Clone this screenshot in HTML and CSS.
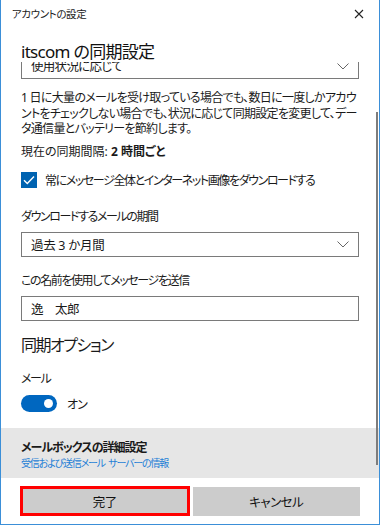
FILE: index.html
```html
<!DOCTYPE html>
<html lang="ja">
<head>
  <meta charset="UTF-8">
  <title>アカウントの設定</title>
  <link rel="stylesheet" href="styles.css">
</head>
<body>
  <div class="window">
    <div class="titlebar">
      <span class="title">アカウントの設定</span>
      <svg class="close" width="10" height="10" viewBox="0 0 10 10">
        <path d="M1 1 L9 9 M9 1 L1 9" stroke="#222" stroke-width="1.1" fill="none"/>
      </svg>
    </div>
    <h1 class="heading">itscom の同期設定</h1>
    <div class="scroll">
      <div class="content">
        <div class="select select-cut">
          <span>使用状況に応じて</span>
          <svg class="chevron" width="12" height="7" viewBox="0 0 12 7"><path d="M0.5 0.5 L6 6 L11.5 0.5" stroke="#666" fill="none"/></svg>
        </div>
        <p class="desc">1 日に大量のメールを受け取っている場合でも、数日に一度しかアカウ<br>ントをチェックしない場合でも、状況に応じて同期設定を変更して、デー<br>タ通信量とバッテリーを節約します。</p>
        <p class="current">現在の同期間隔: <b>2 時間ごと</b></p>
        <label class="check">
          <span class="box">
            <svg width="16" height="16" viewBox="0 0 16 16"><path d="M3 8.2 L6.3 11.5 L13 4.5" stroke="#fff" stroke-width="1.4" fill="none"/></svg>
          </span>
          常にメッセージ全体とインターネット画像をダウンロードする
        </label>
        <div class="field-label">ダウンロードするメールの期間</div>
        <div class="select">
          <span>過去 3 か月間</span>
          <svg class="chevron" width="12" height="7" viewBox="0 0 12 7"><path d="M0.5 0.5 L6 6 L11.5 0.5" stroke="#666" fill="none"/></svg>
        </div>
        <div class="field-label">この名前を使用してメッセージを送信</div>
        <div class="input">逸　太郎</div>
        <h2 class="subheading">同期オプション</h2>
        <div class="field-label">メール</div>
        <div class="toggle-row">
          <span class="toggle"><span class="knob"></span></span>
          <span>オン</span>
        </div>
      </div>
      <div class="scrollbar"></div>
      <div class="advanced">
        <div class="adv-title">メールボックスの詳細設定</div>
        <a class="adv-link">受信および送信メール サーバーの情報</a>
      </div>
    </div>
    <div class="footer">
      <button class="btn btn-done">完了</button>
      <button class="btn">キャンセル</button>
    </div>
  </div>
</body>
</html>
```

FILE: styles.css
```css
* {
  box-sizing: border-box;
}

body {
  margin: 0;
  font-family: "Noto Sans", "Noto Sans CJK JP", sans-serif;
  font-feature-settings: "palt";
  color: #1a1a1a;
  background: #fff;
}

.window {
  width: 380px;
  height: 525px;
  border: 1px solid #3b8fd8;
  border-top: none;
  display: flex;
  flex-direction: column;
  overflow: hidden;
  background: #fff;
}

.titlebar {
  height: 29px;
  display: flex;
  align-items: center;
  justify-content: space-between;
  padding: 0 15px 2px 11px;
}

.title {
  font-size: 10.5px;
  letter-spacing: -0.4px;
  color: #222;
}

.heading {
  margin: 0;
  height: 33px;
  padding: 14px 0 0 20px;
  font-size: 17px;
  line-height: 18px;
  letter-spacing: -0.7px;
  font-weight: 400;
  color: #111;
  position: relative;
  z-index: 1;
  background: #fff;
}

.scroll {
  flex: 1;
  position: relative;
  display: flex;
  flex-direction: column;
  overflow: hidden;
}

.content {
  flex: 1;
  padding: 0 20px;
  font-size: 12px;
}

.select {
  height: 25px;
  border: 1px solid #7a7a7a;
  display: flex;
  align-items: center;
  justify-content: space-between;
  padding: 0 9px;
  font-size: 12.5px;
  letter-spacing: -0.3px;
}

.select-cut {
  margin-top: -10px;
  height: 27px;
  letter-spacing: -0.7px;
}

.chevron {
  margin-top: 1px;
}

.desc {
  margin: 11px 0 0;
  line-height: 15.5px;
  font-size: 12px;
  letter-spacing: -0.7px;
  white-space: nowrap;
}

.current {
  margin: 5px 0 0;
  font-size: 12px;
}

.current b {
  font-weight: 700;
}

.check {
  display: flex;
  align-items: center;
  gap: 8px;
  margin-top: 11px;
  font-size: 12px;
  letter-spacing: -1.4px;
}

.box {
  width: 16px;
  height: 16px;
  background: #0063b1;
  display: flex;
  flex: none;
}

.field-label {
  margin-top: 18px;
  font-size: 12px;
  letter-spacing: -1.4px;
}

.select + .field-label {
  margin-top: 14px;
}

.field-label + .select,
.field-label + .input {
  margin-top: 7px;
}

.input {
  height: 25px;
  border: 1px solid #7a7a7a;
  padding: 0 9px;
  display: flex;
  align-items: center;
  font-size: 12.5px;
  letter-spacing: -0.5px;
}

.subheading {
  margin: 11px 0 0;
  font-size: 16px;
  letter-spacing: -1.5px;
  font-weight: 400;
}

.subheading + .field-label {
  margin-top: 13px;
}

.toggle-row {
  display: flex;
  align-items: center;
  gap: 10px;
  margin-top: 8px;
  font-size: 12px;
  letter-spacing: -1px;
}

.toggle {
  width: 36px;
  height: 17px;
  border-radius: 9px;
  background: #0067c0;
  display: flex;
  align-items: center;
  justify-content: flex-end;
  padding-right: 4px;
}

.knob {
  width: 9px;
  height: 9px;
  border-radius: 50%;
  background: #fff;
}

.advanced {
  height: 50px;
  background: #e6e6e6;
  padding: 12px 20px 0;
}

.adv-title {
  font-size: 12px;
  font-weight: 700;
  line-height: 15px;
  letter-spacing: -1px;
}

.adv-link {
  display: block;
  font-size: 10px;
  color: #1f7fd6;
  line-height: 16px;
  letter-spacing: -1.2px;
  word-spacing: 2px;
}

.scrollbar {
  position: absolute;
  right: 1px;
  top: 50px;
  width: 2px;
  height: 353px;
  background: #7d7d7d;
}

.footer {
  height: 46px;
  display: flex;
  gap: 3px;
  padding: 9px 19px 0;
}

.btn {
  flex: 1;
  height: 29px;
  border: 2px solid #ccc;
  background: #ccc;
  font-family: inherit;
  font-feature-settings: "palt";
  font-size: 12.5px;
  letter-spacing: -0.5px;
  color: #111;
  padding: 0;
}

.btn-done {
  border: 3.5px solid #f00;
  height: 30px;
  margin-top: -1px;
}
```
